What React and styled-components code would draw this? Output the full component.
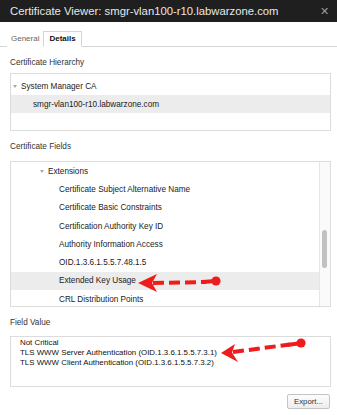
import React from 'react';
import styled, { createGlobalStyle } from 'styled-components';

const GlobalStyle = createGlobalStyle`
  html, body {
    margin: 0;
    padding: 0;
    background: #ffffff;
  }
  body {
    font-family: "Liberation Sans", Arial, sans-serif;
  }
`;

const Window = styled.div`
  position: relative;
  width: 337px;
  height: 415px;
  background: #ffffff;
  overflow: hidden;
  color: #222;
  font-size: 8.2px;
`;

const TitleBar = styled.div`
  height: 22px;
  background: #1f1f1f;
  color: #e8e8e8;
  font-size: 11.3px;
  display: flex;
  align-items: center;
  justify-content: space-between;
  padding: 0 8px 0 10px;
`;

const Close = styled.span`
  color: #9a9a9a;
  font-size: 11px;
`;

const TabRow = styled.div`
  height: 25px;
  display: flex;
  align-items: flex-end;
  padding-left: 7px;
  border-bottom: 1px solid #d4d4d4;
  box-sizing: border-box;
`;

const Tab = styled.div`
  height: 14px;
  line-height: 14px;
  padding: 0 ${p => (p.$active ? '5px' : '3px')};
  margin-bottom: -1px;
  font-size: 8px;
  font-weight: ${p => (p.$active ? 'bold' : 'normal')};
  color: ${p => (p.$active ? '#111' : '#666')};
  background: #fff;
  border: 1px solid ${p => (p.$active ? '#d4d4d4' : 'transparent')};
  border-bottom-color: ${p => (p.$active ? '#fff' : 'transparent')};
`;

const Content = styled.div`
  padding: 0 6px 0 10px;
`;

const Label = styled.div`
  line-height: 12px;
  padding: 10px 0 ${p => p.$after || 4}px;
  color: #333;
`;

const Box = styled.div`
  position: relative;
  height: ${p => p.$h}px;
  border: 1px solid #dcdcdc;
  box-sizing: border-box;
  padding-top: ${p => p.$pt || 0}px;
  overflow: hidden;
`;

const Row = styled.div`
  height: ${p => p.$h || 18}px;
  display: flex;
  align-items: center;
  padding-left: ${p => p.$indent}px;
  margin-right: ${p => (p.$scroll ? 10 : 0)}px;
  background: ${p => (p.$selected ? '#ececec' : 'transparent')};
  white-space: nowrap;
`;

const Caret = styled.span`
  display: inline-block;
  width: 0;
  height: 0;
  border-left: 2.5px solid transparent;
  border-right: 2.5px solid transparent;
  border-top: 3px solid #a8a8a8;
  margin-right: 4px;
`;

const ScrollTrack = styled.div`
  position: absolute;
  top: 0;
  right: 0;
  bottom: 0;
  width: 10px;
  background: #fafafa;
  border-left: 1px solid #e6e6e6;
`;

const ScrollThumb = styled.div`
  position: absolute;
  left: 2px;
  top: 68px;
  width: 5px;
  height: 38px;
  border-radius: 3px;
  background: #c1c1c1;
`;

const ValueBox = styled.div`
  height: 51px;
  border: 1px solid #dcdcdc;
  box-sizing: border-box;
  padding: 1px 0 0 9px;
  line-height: 10px;
  font-size: 7.9px;
  color: #111;
`;

const Footer = styled.div`
  display: flex;
  justify-content: flex-end;
  padding-top: 7px;
  padding-right: 1px;
`;

const Button = styled.button`
  width: 43px;
  height: 15px;
  padding: 0;
  font-family: "Liberation Sans", Arial, sans-serif;
  font-size: 7.8px;
  color: #333;
  border: 1px solid #c4c4c4;
  border-radius: 2px;
  background: linear-gradient(#fdfdfd, #ececec);
`;

const Overlay = styled.svg`
  position: absolute;
  left: 0;
  top: 0;
  pointer-events: none;
`;

const fieldRows = [
  'Certificate Subject Alternative Name',
  'Certificate Basic Constraints',
  'Certification Authority Key ID',
  'Authority Information Access',
  'OID.1.3.6.1.5.5.7.48.1.5',
  'Extended Key Usage',
  'CRL Distribution Points',
];

export default function App() {
  return (
    <Window>
      <GlobalStyle />
      <TitleBar>
        <span>Certificate Viewer: smgr-vlan100-r10.labwarzone.com</span>
        <Close>✕</Close>
      </TitleBar>
      <TabRow>
        <Tab>General</Tab>
        <Tab $active>Details</Tab>
      </TabRow>
      <Content>
        <Label>Certificate Hierarchy</Label>
        <Box $h={58} $pt={3}>
          <Row $indent={2}><Caret />System Manager CA</Row>
          <Row $indent={22} $selected>smgr-vlan100-r10.labwarzone.com</Row>
        </Box>

        <Label $after={8}>Certificate Fields</Label>
        <Box $h={146}>
          <Row $indent={29} $h={18.3} $scroll><Caret />Extensions</Row>
          {fieldRows.map(name => (
            <Row key={name} $indent={48} $h={18.3} $scroll $selected={name === 'Extended Key Usage'}>
              {name}
            </Row>
          ))}
          <ScrollTrack>
            <ScrollThumb />
          </ScrollTrack>
        </Box>

        <Label $after={7}>Field Value</Label>
        <ValueBox>
          <div>Not Critical</div>
          <div>TLS WWW Server Authentication (OID.1.3.6.1.5.5.7.3.1)</div>
          <div>TLS WWW Client Authentication (OID.1.3.6.1.5.5.7.3.2)</div>
        </ValueBox>
        <Footer>
          <Button>Export...</Button>
        </Footer>
      </Content>

      <Overlay width="337" height="415" viewBox="0 0 337 415">
        <g fill="#ee1c1c" stroke="#ee1c1c">
          <line x1="153" y1="283" x2="206" y2="282" strokeWidth="4" strokeDasharray="11 5" fill="none" />
          <line x1="203" y1="282" x2="215" y2="281" strokeWidth="4" fill="none" />
          <circle cx="216" cy="281" r="4.6" stroke="none" />
          <polygon points="138,283 157,274 152,283 157,292" stroke="none" />

          <line x1="233" y1="352" x2="290" y2="344.5" strokeWidth="4" strokeDasharray="11 5" fill="none" />
          <line x1="287" y1="345" x2="300" y2="343.3" strokeWidth="4" fill="none" />
          <circle cx="301" cy="343" r="4.6" stroke="none" />
          <polygon points="221,353 235,344 232,352.5 238,362" stroke="none" />
        </g>
      </Overlay>
    </Window>
  );
}
